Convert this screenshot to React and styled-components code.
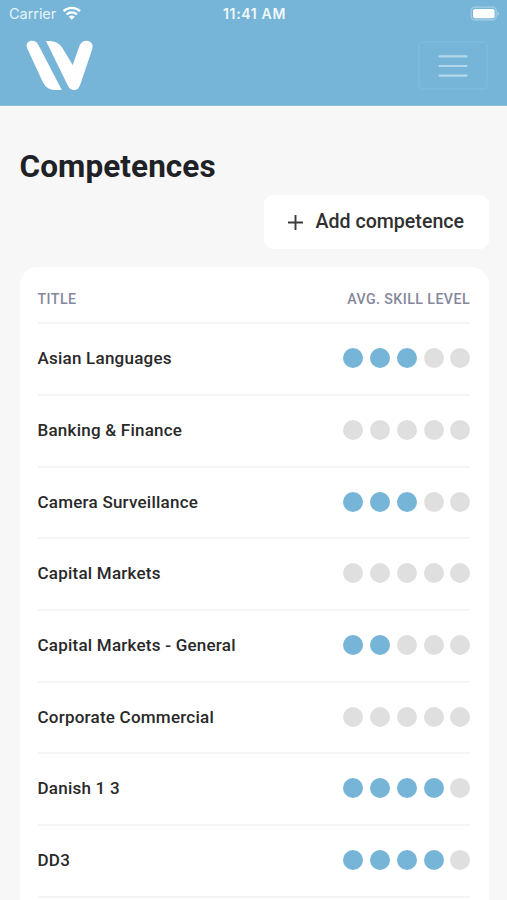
import React from 'react';
import styled, { createGlobalStyle } from 'styled-components';

const GlobalStyle = createGlobalStyle`
  * { box-sizing: border-box; }
  body {
    margin: 0;
    background: #f7f7f7;
    font-family: Roboto, "Liberation Sans", sans-serif;
    color: #212529;
  }
`;

const Screen = styled.div`
  height: 900px;
  overflow: hidden;
  background: #f7f7f7;
`;

const Header = styled.header`
  height: 106px;
  background: #76b5d8;
  border-bottom: 1px solid #8fc0dd;
`;

const StatusBar = styled.div`
  display: grid;
  grid-template-columns: 1fr auto 1fr;
  align-items: center;
  height: 27px;
  padding: 0 7px 0 9px;
  font-family: Inter, "Liberation Sans", sans-serif;
  color: #fff;
`;

const Carrier = styled.div`
  display: flex;
  align-items: center;
  gap: 5.5px;
  font-size: 14.5px;
  letter-spacing: -0.05px;
  color: #e6f3fa;
`;

const Clock = styled.div`
  font-size: 14px;
  font-weight: 600;
  letter-spacing: 0.65px;
  color: #f1f8fc;
`;

const Power = styled.div`
  display: flex;
  justify-content: flex-end;
`;

const NavBar = styled.nav`
  display: flex;
  align-items: flex-start;
  justify-content: space-between;
  padding: 13px 19px 0 26px;
`;

const MenuButton = styled.button`
  display: flex;
  align-items: center;
  justify-content: center;
  width: 70px;
  height: 49px;
  margin-top: 1px;
  padding: 0;
  border: 2px solid #7db9db;
  border-radius: 5px;
  background: transparent;
`;

const Content = styled.main`
  padding: 42px 18.5px 0 19.5px;
`;

const Heading = styled.h1`
  margin: 0;
  font-size: 31.5px;
  line-height: 38px;
  font-weight: 700;
  letter-spacing: 0.08px;
  color: #1e2226;
`;

const Actions = styled.div`
  display: flex;
  justify-content: flex-end;
  margin-top: 9px;
`;

const AddButton = styled.button`
  display: flex;
  align-items: center;
  gap: 13px;
  height: 54px;
  width: 225px;
  padding: 0 0 0 24px;
  border: 0;
  border-radius: 9px;
  background: #fff;
  font: 500 19.6px/54px Roboto, "Liberation Sans", sans-serif;
  white-space: nowrap;
  color: #303030;
`;

const ButtonLabel = styled.span`
  line-height: 54px;
`;

const Card = styled.section`
  height: 700px;
  margin-top: 17.5px;
  padding: 0 18.5px 0 18px;
  border-radius: 18px;
  background: #fff;
`;

const TableHead = styled.div`
  display: flex;
  align-items: center;
  justify-content: space-between;
  height: 57.7px;
  padding-top: 9px;
  border-bottom: 2px solid #f5f5f5;
  font-size: 14.2px;
  font-weight: 500;
  letter-spacing: 0.43px;
  color: #85879c;
`;

const Row = styled.div`
  display: flex;
  align-items: center;
  justify-content: space-between;
  height: 71.7px;
  padding-bottom: 1.4px;
  border-bottom: 2px solid #f5f5f5;
`;

const RowTitle = styled.div`
  font-size: 17px;
  font-weight: 500;
  letter-spacing: 0.23px;
  color: #292929;
`;

const Rating = styled.div`
  display: flex;
  gap: 6.8px;
  margin-right: -0.3px;
`;

const Dot = styled.span`
  width: 20px;
  height: 20px;
  border-radius: 50%;
  background: ${({ $filled }) => ($filled ? '#76b5d8' : '#dfdfdf')};
`;

const competences = [
  ['Asian Languages', 3],
  ['Banking & Finance', 0],
  ['Camera Surveillance', 3],
  ['Capital Markets', 0],
  ['Capital Markets - General', 2],
  ['Corporate Commercial', 0],
  ['Danish 1 3', 4],
  ['DD3', 4],
];

const WifiIcon = () => (
  <svg width="20" height="16" viewBox="0 0 20 16" fill="none" stroke="#fff" strokeWidth="2.4">
    <path d="M1.6 5.2C6.2 .8 13.4 .8 18 5.2" />
    <path d="M4.7 8.5C7.6 5.7 12 5.7 14.9 8.5" />
    <path d="M6.8 10.700C8.5 9 11.1 9 12.8 10.700L9.8 13.800Z" fill="#fff" stroke="none" />
  </svg>
);

const BatteryIcon = () => (
  <svg width="31" height="16" viewBox="0 0 31 16">
    <rect x="2.2" y="1.2" width="25" height="12.6" rx="3.6" fill="none" stroke="#a3cfe7" strokeWidth="1.2" />
    <rect x="4" y="3" width="21.6" height="9.2" rx="2" fill="#fff" />
    <path d="M28.6 5.500v4.4c1.7-.7 1.7-3.7 0-4.4Z" fill="#b4d8ec" />
  </svg>
);

const Logo = () => (
  <svg width="68" height="51" viewBox="0 0 68 51" fill="#fff">
    <path d="M1.300 8.500C-.9 4 2.200 .8 6.2.8 8.8.8 10.900 2 12.200 4.6L35.800 50H28.500C22.500 50 19 46.5 16.300 41Z" />
    <path d="M20 1C28 .5 33.500 2.500 37 9L46.700 25 53.400 6C54.900 2.400 57.500 .8 60.500 .8 65 .8 67.800 4.700 66.200 9.200L54.300 44.500C52.900 48.400 51.200 50 48.300 50 45.500 50 43.500 49 41.800 45.500Z" />
  </svg>
);

const MenuIcon = () => (
  <svg width="30" height="24" viewBox="0 0 30 24" stroke="#b2d8ec" strokeWidth="2.2" strokeLinecap="round">
    <path d="M1.500 2.300H28.500M1.500 12H28.500M1.500 21.700H28.500" />
  </svg>
);

const PlusIcon = () => (
  <svg width="15" height="15" viewBox="0 0 15 15" stroke="#3a3a3a" strokeWidth="1.9">
    <path d="M7.500 0V15M0 7.500H15" />
  </svg>
);

export default function App() {
  return (
    <>
      <GlobalStyle />
      <Screen>
        <Header>
          <StatusBar>
            <Carrier>Carrier <WifiIcon /></Carrier>
            <Clock>11:41 AM</Clock>
            <Power><BatteryIcon /></Power>
          </StatusBar>
          <NavBar>
            <Logo />
            <MenuButton aria-label="Menu"><MenuIcon /></MenuButton>
          </NavBar>
        </Header>
        <Content>
          <Heading>Competences</Heading>
          <Actions>
            <AddButton><PlusIcon /><ButtonLabel>Add competence</ButtonLabel></AddButton>
          </Actions>
          <Card>
            <TableHead>
              <span>TITLE</span>
              <span>AVG. SKILL LEVEL</span>
            </TableHead>
            {competences.map(([title, level]) => (
              <Row key={title}>
                <RowTitle>{title}</RowTitle>
                <Rating>
                  {[1, 2, 3, 4, 5].map((step) => <Dot key={step} $filled={step <= level} />)}
                </Rating>
              </Row>
            ))}
          </Card>
        </Content>
      </Screen>
    </>
  );
}
